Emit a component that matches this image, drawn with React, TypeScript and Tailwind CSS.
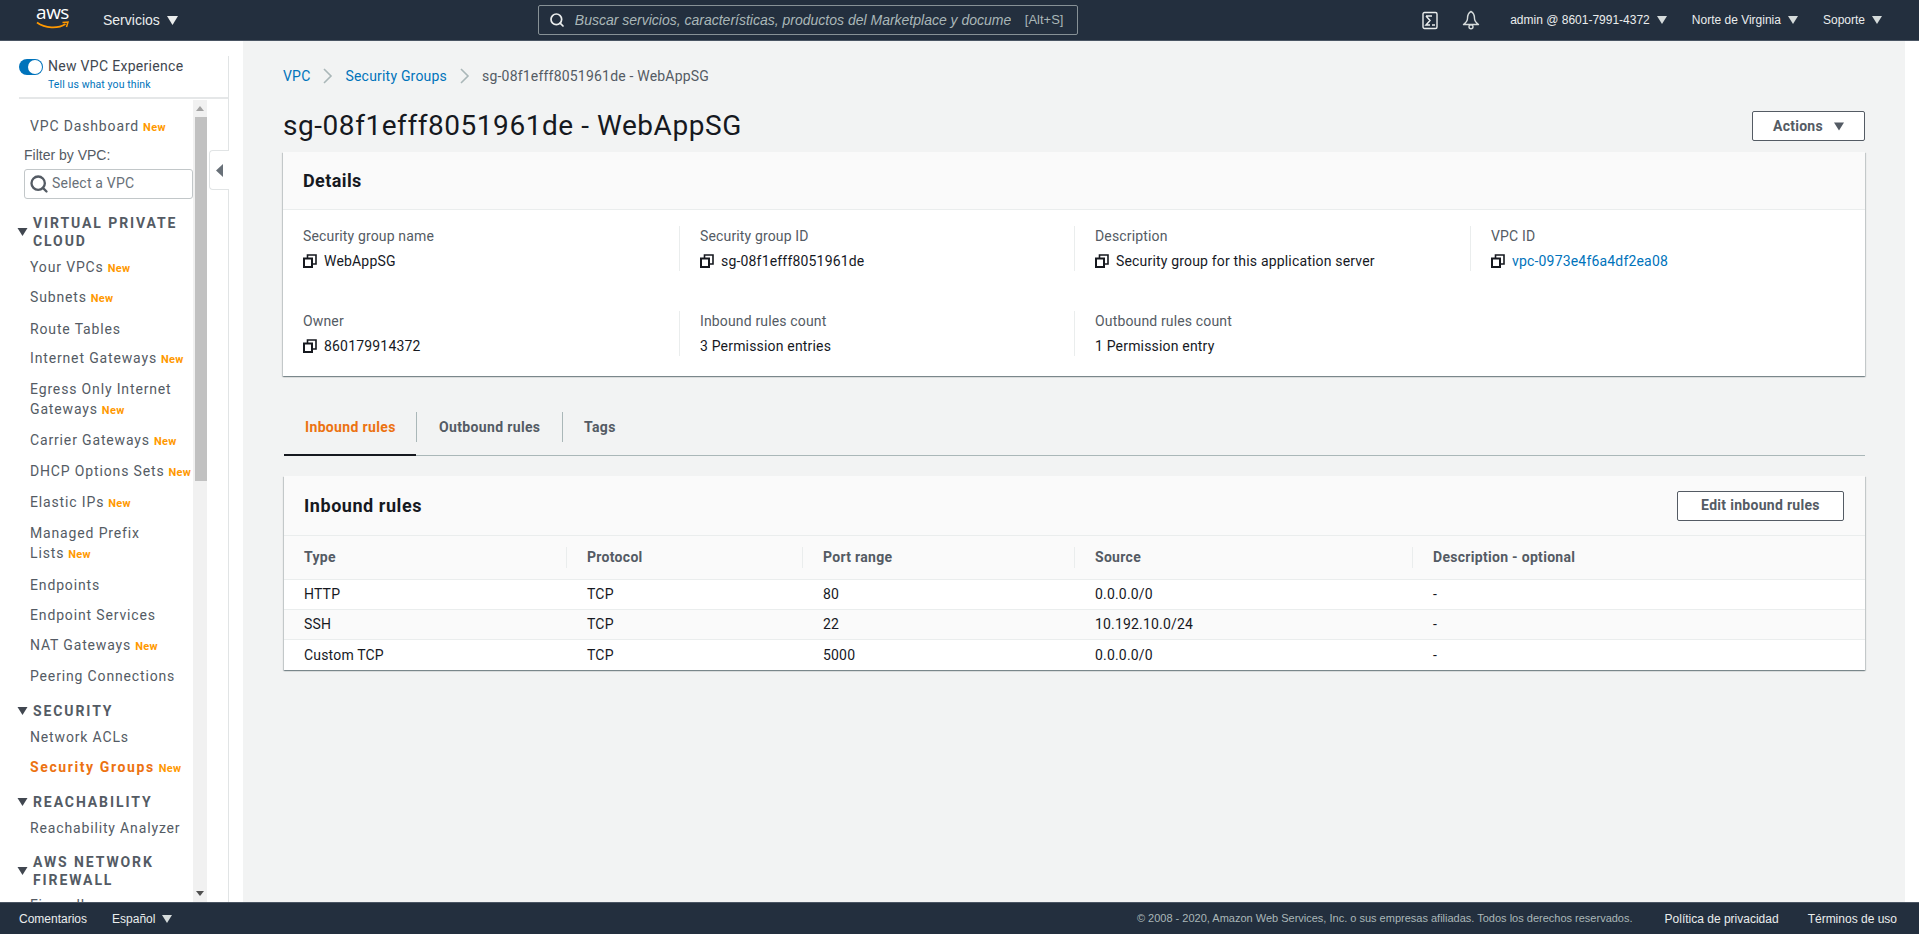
import React from "react";
import { Search } from "lucide-react";

const Caret = ({ c = "#fff", w = 10, h = 8 }: { c?: string; w?: number; h?: number }) => (
  <svg width={w} height={h} viewBox="0 0 10 8" className="shrink-0"><path d="M0 0H10L5 8Z" fill={c} /></svg>
);

const Copy = () => (
  <svg width="14" height="14" viewBox="0 0 14 14" fill="none" className="shrink-0">
    <path d="M4.5 4V1H13V10H10" stroke="#16191f" strokeWidth="1.6" />
    <rect x="1" y="4.5" width="8" height="8.5" stroke="#16191f" strokeWidth="2" />
  </svg>
);

const New = () => <span className="ml-[4px] text-[11px] font-bold text-[#ff9900] tracking-[0.3px]">New</span>;

const Item = ({ label, isNew, h = "h-[30.6px]" }: { label: React.ReactNode; isNew?: boolean; h?: string }) => (
  <div className={`${h} pl-[30px] flex items-center text-[14px] leading-[20.5px] text-[#545b64] tracking-[0.85px]`}>
    <div>{label}{isNew && <New />}</div>
  </div>
);

const Section = ({ children, cls }: { children: React.ReactNode; cls: string }) => (
  <div className={`${cls} flex items-center pl-[17px] text-[14px] leading-[18px] font-bold text-[#545b64] tracking-[1.9px]`}>
    <Caret c="#414750" w={11} h={8} />
    <div className="ml-[4px] pl-[1px]">{children}</div>
  </div>
);

const Field = ({ label, value, link, copy, divider, w = "w-[396px]" }: { label: string; value: string; link?: boolean; copy?: boolean; divider?: boolean; w?: string }) => (
  <div className={`${w} shrink-0 h-[45px] px-[20px] ${divider ? "border-r border-[#eaeded]" : ""}`}>
    <div className="text-[14px] leading-[20px] text-[#545b64] tracking-[0.15px]">{label}</div>
    <div className={`mt-[5px] flex items-center gap-[7px] text-[14px] leading-[20px] tracking-[0.18px] ${link ? "text-[#0073bb]" : "text-[#16191f]"}`}>
      {copy && <Copy />}
      <span>{value}</span>
    </div>
  </div>
);

const rows = [
  ["HTTP", "TCP", "80", "0.0.0.0/0", "-"],
  ["SSH", "TCP", "22", "10.192.10.0/24", "-"],
  ["Custom TCP", "TCP", "5000", "0.0.0.0/0", "-"],
];
const colW = ["w-[283px]", "w-[236px]", "w-[272px]", "w-[338px]", "flex-1"];

export default function App() {
  return (
    <div className="h-screen w-full overflow-hidden flex flex-col bg-white font-['Roboto',sans-serif]">
      {/* top bar */}
      <header className="h-[41px] shrink-0 bg-[#232f3e] border-b border-[#4a5563] flex items-center font-['Liberation_Sans',sans-serif] text-white">
        <div className="ml-[35px] w-[35px] flex flex-col items-center">
          <span className="text-[19px] leading-[15px] tracking-[-0.5px] font-['Open_Sans',sans-serif] mt-[-5px]">aws</span>
          <svg width="33" height="9" viewBox="0 0 33 9" fill="none" className="mt-[1px]">
            <path d="M1 1.5C9 7.5 22 8 29.5 3" stroke="#ff9900" strokeWidth="1.7" />
            <path d="M26.5 1.5L32 1L30.5 6" stroke="#ff9900" strokeWidth="1.5" />
          </svg>
        </div>
        <span className="ml-[33px] text-[14px] text-[#eaeded]">Servicios</span>
        <span className="ml-[7px]"><Caret c="#eaeded" w={11} h={9} /></span>
        <div className="ml-[360px] w-[540px] h-[30px] border border-[#879196] rounded-[2px] flex items-center text-[14px] pl-[10px] bg-[#232f3e]">
          <Search size={16} color="#eaeded" strokeWidth={2.6} />
          <span className="ml-[10px] italic text-[#aab7b8] whitespace-nowrap w-[436px] overflow-hidden">Buscar servicios, características, productos del Marketplace y docume</span>
          <span className="ml-[14px] text-[#aab7b8] text-[13px] whitespace-nowrap">[Alt+S]</span>
        </div>
        <div className="ml-auto flex items-center text-[12px] text-[#eaeded]">
          <svg width="16" height="19" viewBox="0 0 16 19" fill="none" className="mr-[24px] ml-[2px]">
            <rect x="1" y="1.5" width="14" height="16" rx="1.5" stroke="#eaeded" strokeWidth="1.4" />
            <path d="M4 5H10M4 5L8 9.5L4 14H8M10 14H13" stroke="#eaeded" strokeWidth="1.5" />
          </svg>
          <svg width="18" height="20" viewBox="0 0 18 20" fill="none" className="mr-[30px]">
            <path d="M9 1.5C6 3 5.5 6 5.5 8.5C5.5 11 3.5 13 1.5 14.5H16.5C14.5 13 12.5 11 12.5 8.5C12.5 6 12 3 9 1.5Z" stroke="#d5dbdb" strokeWidth="1.4" strokeLinejoin="round" />
            <circle cx="9" cy="16.8" r="2" stroke="#d5dbdb" strokeWidth="1.4" />
          </svg>
          <span>admin @ 8601-7991-4372</span>
          <span className="ml-[7px] mr-[25px]"><Caret c="#d5dbdb" w={10} h={8} /></span>
          <span>Norte de Virginia</span>
          <span className="ml-[7px] mr-[25px]"><Caret c="#d5dbdb" w={10} h={8} /></span>
          <span>Soporte</span>
          <span className="ml-[7px] mr-[37px]"><Caret c="#d5dbdb" w={10} h={8} /></span>
        </div>
      </header>

      <div className="flex-1 min-h-0 flex">
        {/* sidebar */}
        <aside className="w-[243px] shrink-0 bg-white flex flex-col pt-[15px]">
          <div className="w-[229px] shrink-0 h-[44px] ml-0 pl-[19px] border-r border-[#e1e4e5]">
            <div className="h-[43px] border-b-2 border-[#e5e7e8] flex">
              <div className="mt-[3px] w-[24px] h-[16px] rounded-full bg-[#0073bb] flex items-center justify-end pr-[1px]">
                <div className="w-[14px] h-[14px] rounded-full bg-white" />
              </div>
              <div className="ml-[5px]">
                <div className="text-[14px] leading-[20px] text-[#414750] tracking-[0.3px]">New VPC Experience</div>
                <div className="text-[10.5px] leading-[14px] mt-[2px] text-[#0073bb] tracking-[0.1px]">Tell us what you think</div>
              </div>
            </div>
          </div>
          <div className="flex-1 min-h-0 w-[229px] flex border-r border-[#e1e4e5]">
            <nav className="w-[193px] shrink-0 overflow-hidden pt-[12px]">
              <Item label="VPC Dashboard" isNew />
              <div className="pl-[24px] mt-[2px] h-[20px] text-[14px] leading-[20px] text-[#545b64] font-['Liberation_Sans',sans-serif]">Filter by VPC:</div>
              <div className="ml-[24px] mt-[4px] w-[169px] h-[30px] border border-[#c2c7c9] rounded-[3px] flex items-center pl-[4px] text-[14px] text-[#687078]">
                <Search size={20} color="#545b64" strokeWidth={2.8} />
                <span className="ml-[3px] tracking-[0.2px]">Select a VPC</span>
              </div>
              <Section cls="pt-[15px] pb-[3px] h-[54px]"><div>VIRTUAL PRIVATE</div><div>CLOUD</div></Section>
              <Item label="Your VPCs" isNew />
              <Item label="Subnets" isNew />
              <Item label="Route Tables" />
              <Item label="Internet Gateways" isNew />
              <Item label="Egress Only Internet Gateways" isNew h="h-[51px]" />
              <Item label="Carrier Gateways" isNew />
              <Item label="DHCP Options Sets" isNew h="h-[31px]" />
              <Item label="Elastic IPs" isNew h="h-[31px]" />
              <Item label="Managed Prefix Lists" isNew h="h-[51px]" />
              <Item label="Endpoints" />
              <Item label="Endpoint Services" />
              <Item label="NAT Gateways" isNew />
              <Item label="Peering Connections" />
              <Section cls="pt-[8px] h-[30px]">SECURITY</Section>
              <Item label="Network ACLs" />
              <Item label={<span className="font-bold text-[#ec7211] tracking-[1.6px]">Security Groups</span>} isNew />
              <Section cls="pt-[8px] h-[30px]">REACHABILITY</Section>
              <Item label="Reachability Analyzer" />
              <Section cls="pt-[8px] h-[46px]"><div>AWS NETWORK</div><div>FIREWALL</div></Section>
              <Item label="Firewalls" h="h-[32px]" />
            </nav>
            <div className="w-[14px] shrink-0 bg-[#f1f1f1] flex flex-col items-center relative">
              <div className="h-[17px] shrink-0 flex items-center justify-center">
                <svg width="8" height="5" viewBox="0 0 8 5"><path d="M4 0L8 5H0Z" fill="#a3a3a3" /></svg>
              </div>
              <div className="w-[12px] ml-[2px] h-[364px] shrink-0 bg-[#c1c1c1]" />
              <div className="mt-auto h-[17px] shrink-0 flex items-center justify-center">
                <svg width="8" height="5" viewBox="0 0 8 5"><path d="M0 0H8L4 5Z" fill="#505050" /></svg>
              </div>
            </div>
            <div className="relative flex-1">
              <div className="absolute left-[2px] right-[-1px] top-[50px] h-[40px] bg-white border border-r-0 border-[#e1e4e5] rounded-l-[4px] flex items-center pl-[6px]">
                <svg width="7" height="13" viewBox="0 0 7 13"><path d="M7 0V13L0 6.5Z" fill="#687078" /></svg>
              </div>
            </div>
          </div>
        </aside>

        {/* main */}
        <main className="flex-1 min-w-0 bg-[#f2f3f3] pl-[40px] pr-[40px]">
          <div className="pt-[25px] h-[60px] flex items-start text-[14px] leading-[20px] text-[#545b64] tracking-[0.2px]">
            <span className="text-[#0073bb]">VPC</span>
            <svg width="11" height="16" viewBox="0 0 11 16" fill="none" className="mx-[12px] mt-[2px]"><path d="M2 1L9 8L2 15" stroke="#aab7b8" strokeWidth="1.6" /></svg>
            <span className="text-[#0073bb]">Security Groups</span>
            <svg width="11" height="16" viewBox="0 0 11 16" fill="none" className="mx-[12px] mt-[2px]"><path d="M2 1L9 8L2 15" stroke="#aab7b8" strokeWidth="1.6" /></svg>
            <span>sg-08f1efff8051961de - WebAppSG</span>
          </div>
          <div className="h-[51px] flex items-start justify-between">
            <h1 className="text-[28px] leading-[50px] text-[#16191f] font-normal tracking-[0.55px]">sg-08f1efff8051961de - WebAppSG</h1>
            <div className="mt-[10px] w-[113px] h-[30px] bg-white border border-[#545b64] rounded-[2px] flex items-center justify-center gap-[11px] text-[14px] font-bold text-[#545b64] tracking-[0.25px]">
              Actions <Caret c="#545b64" w={10} h={9} />
            </div>
          </div>

          {/* details card */}
          <section className="mt-0 bg-white shadow-[0_1px_1px_0_rgba(0,28,36,0.3),1px_1px_1px_0_rgba(0,28,36,0.15),-1px_1px_1px_0_rgba(0,28,36,0.15)]">
            <div className="h-[58px] bg-[#fafafa] border-b border-[#eaeded] flex items-center pl-[20px] text-[18px] font-bold text-[#16191f] tracking-[0.4px]">Details</div>
            <div className="pt-[16px] h-[166px]">
              <div className="flex">
                <Field w="w-[397px]" label="Security group name" value="WebAppSG" copy divider />
                <Field w="w-[395px]" label="Security group ID" value="sg-08f1efff8051961de" copy divider />
                <Field label="Description" value="Security group for this application server" copy divider />
                <Field label="VPC ID" value="vpc-0973e4f6a4df2ea08" copy link />
              </div>
              <div className="flex mt-[40px]">
                <Field w="w-[397px]" label="Owner" value="860179914372" copy divider />
                <Field w="w-[395px]" label="Inbound rules count" value="3 Permission entries" divider />
                <Field label="Outbound rules count" value="1 Permission entry" />
              </div>
            </div>
          </section>

          {/* tabs */}
          <div className="mt-[25px] h-[55px] pb-[2px] ml-[1px] border-b border-[#aab7b8] flex items-center text-[14px] font-bold text-[#545b64] tracking-[0.35px]">
            <div className="relative w-[132px] h-full flex items-center pl-[21px] text-[#ec7211]">
              Inbound rules
              <div className="absolute left-0 right-0 bottom-[-3px] h-[2px] bg-[#16191f]" />
            </div>
            <div className="w-[146px] h-[30px] border-l border-[#aab7b8] flex items-center pl-[22px]">Outbound rules</div>
            <div className="h-[30px] border-l border-[#aab7b8] flex items-center pl-[21px]">Tags</div>
          </div>

          {/* rules card */}
          <section className="mt-[20px] ml-[1px] bg-white shadow-[0_1px_1px_0_rgba(0,28,36,0.3),1px_1px_1px_0_rgba(0,28,36,0.15),-1px_1px_1px_0_rgba(0,28,36,0.15)]">
            <div className="h-[60px] bg-[#fafafa] border-b border-[#eaeded] flex items-center justify-between pl-[20px] pr-[21px]">
              <span className="text-[18px] font-bold text-[#16191f] tracking-[0.55px]">Inbound rules</span>
              <div className="w-[167px] h-[30px] bg-white border border-[#545b64] rounded-[2px] flex items-center justify-center text-[14px] font-bold text-[#545b64] tracking-[0.3px]">Edit inbound rules</div>
            </div>
            <div className="h-[44px] bg-[#fafafa] border-b border-[#eaeded] flex items-center text-[14px] font-bold text-[#545b64] tracking-[0.3px]">
              {["Type", "Protocol", "Port range", "Source", "Description - optional"].map((t, i) => (
                <div key={t} className={`${colW[i]} h-[21px] flex items-center pl-[20px] ${i < 4 ? "border-r border-[#eaeded]" : ""}`}>{t}</div>
              ))}
            </div>
            {rows.map((r, ri) => (
              <div key={ri} className={`h-[30px] flex items-center text-[14px] text-[#16191f] tracking-[0.18px] ${ri < 2 ? "border-b border-[#eaeded]" : ""} ${ri === 1 ? "bg-[#fafafa]" : "bg-white"}`}>
                {r.map((c, i) => <div key={i} className={`${colW[i]} pl-[20px]`}>{c}</div>)}
              </div>
            ))}
          </section>
        </main>
        <div className="w-[14px] shrink-0 bg-white" />
      </div>

      {/* footer */}
      <footer className="h-[32px] shrink-0 bg-[#232f3e] border-t border-[#4a5563] flex items-center font-['Liberation_Sans',sans-serif] text-[12px] text-[#eaeded]">
        <span className="ml-[19px]">Comentarios</span>
        <span className="ml-[25px]">Español</span>
        <span className="ml-[7px]"><Caret c="#d5dbdb" w={10} h={8} /></span>
        <span className="ml-auto text-[11px] text-[#aab7b8]">© 2008 - 2020, Amazon Web Services, Inc. o sus empresas afiliadas. Todos los derechos reservados.</span>
        <span className="ml-[32px]">Política de privacidad</span>
        <span className="ml-[29px] mr-[22px]">Términos de uso</span>
      </footer>
    </div>
  );
}
